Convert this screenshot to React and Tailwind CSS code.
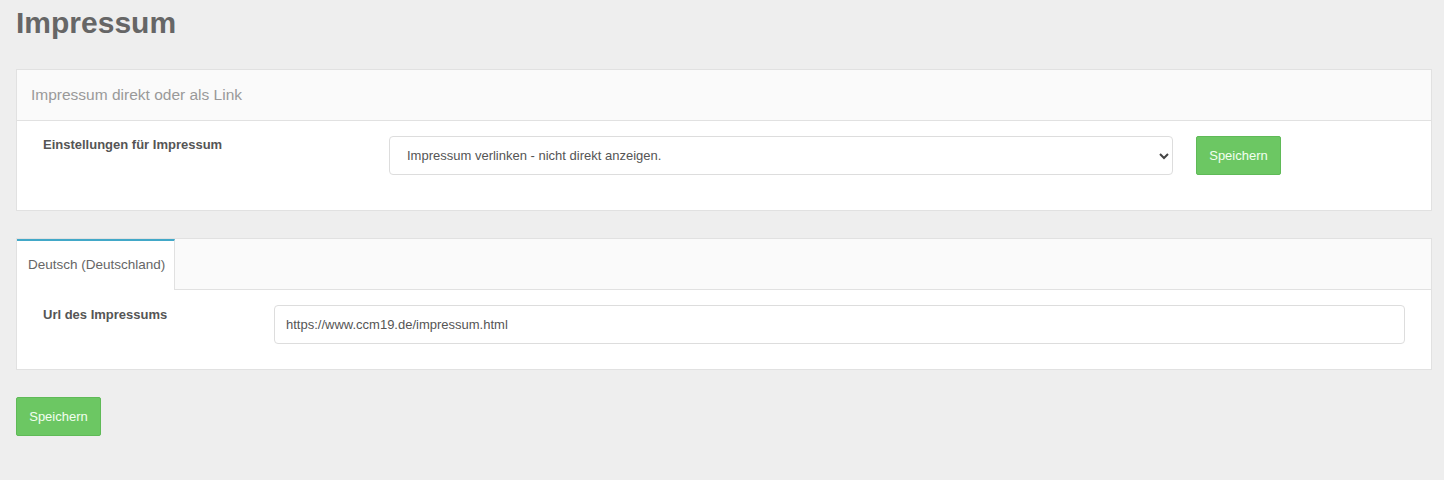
import React from "react";

const SaveButton = () => (
  <button
    type="button"
    className="h-[39px] w-[85px] rounded-[2px] border border-[#5fba57] bg-[#6cc763] text-[13px] text-[#f2fff0]"
  >
    Speichern
  </button>
);

export default function App() {
  return (
    <div
      className="min-h-screen bg-[#eeeeee] pl-4 pr-3 pt-[6px] pb-10"
      style={{ fontFamily: '"Liberation Sans", Arial, sans-serif' }}
    >
      <h1 className="text-[30px] font-bold leading-[33px] text-[#666666]">
        Impressum
      </h1>

      <div className="mt-[30px] border border-[#e1e1e1] bg-white">
        <div className="flex h-[51px] items-center border-b border-[#e1e1e1] bg-[#fafafa] px-[14px] text-[15.5px] text-[#999999]">
          Impressum direkt oder als Link
        </div>
        <div className="flex items-start pl-[26px] pt-[15px] pb-[35px]">
          <label className="w-[346px] text-[13px] font-bold leading-[18px] text-[#555555]">
            Einstellungen für Impressum
          </label>
          <div className="relative w-[784px]">
            <select className="h-[39px] w-full appearance-none rounded-[4px] border border-[#dddddd] bg-white pl-[17px] text-[13px] text-[#555555] outline-none">
              <option>Impressum verlinken - nicht direkt anzeigen.</option>
            </select>
            <svg
              className="pointer-events-none absolute right-[3px] top-[15px]"
              width="12"
              height="10"
              viewBox="0 0 12 10"
            >
              <path
                d="M2 3 L6 7 L10 3"
                fill="none"
                stroke="#444"
                strokeWidth="2"
              />
            </svg>
          </div>
          <div className="ml-[23px]">
            <SaveButton />
          </div>
        </div>
      </div>

      <div className="mt-[27px] border border-[#e1e1e1] bg-white">
        <div className="flex h-[51px] border-b border-[#e1e1e1] bg-[#fafafa]">
          <div className="-mb-px flex w-[158px] items-center border-r border-t-2 border-r-[#e1e1e1] border-t-[#42a8c8] bg-white pl-[11px] text-[13.5px] text-[#666666]">
            Deutsch (Deutschland)
          </div>
        </div>
        <div className="flex items-start pl-[26px] pr-[26px] pt-[15px] pb-[25px]">
          <label className="w-[231px] pt-[1px] text-[13px] font-bold leading-[18px] text-[#555555]">
            Url des Impressums
          </label>
          <input
            type="text"
            defaultValue="https://www.ccm19.de/impressum.html"
            className="h-[39px] flex-1 rounded-[4px] border border-[#dddddd] bg-white px-[11px] text-[13px] text-[#555555] outline-none"
          />
        </div>
      </div>

      <div className="mt-[27px]">
        <SaveButton />
      </div>
    </div>
  );
}
